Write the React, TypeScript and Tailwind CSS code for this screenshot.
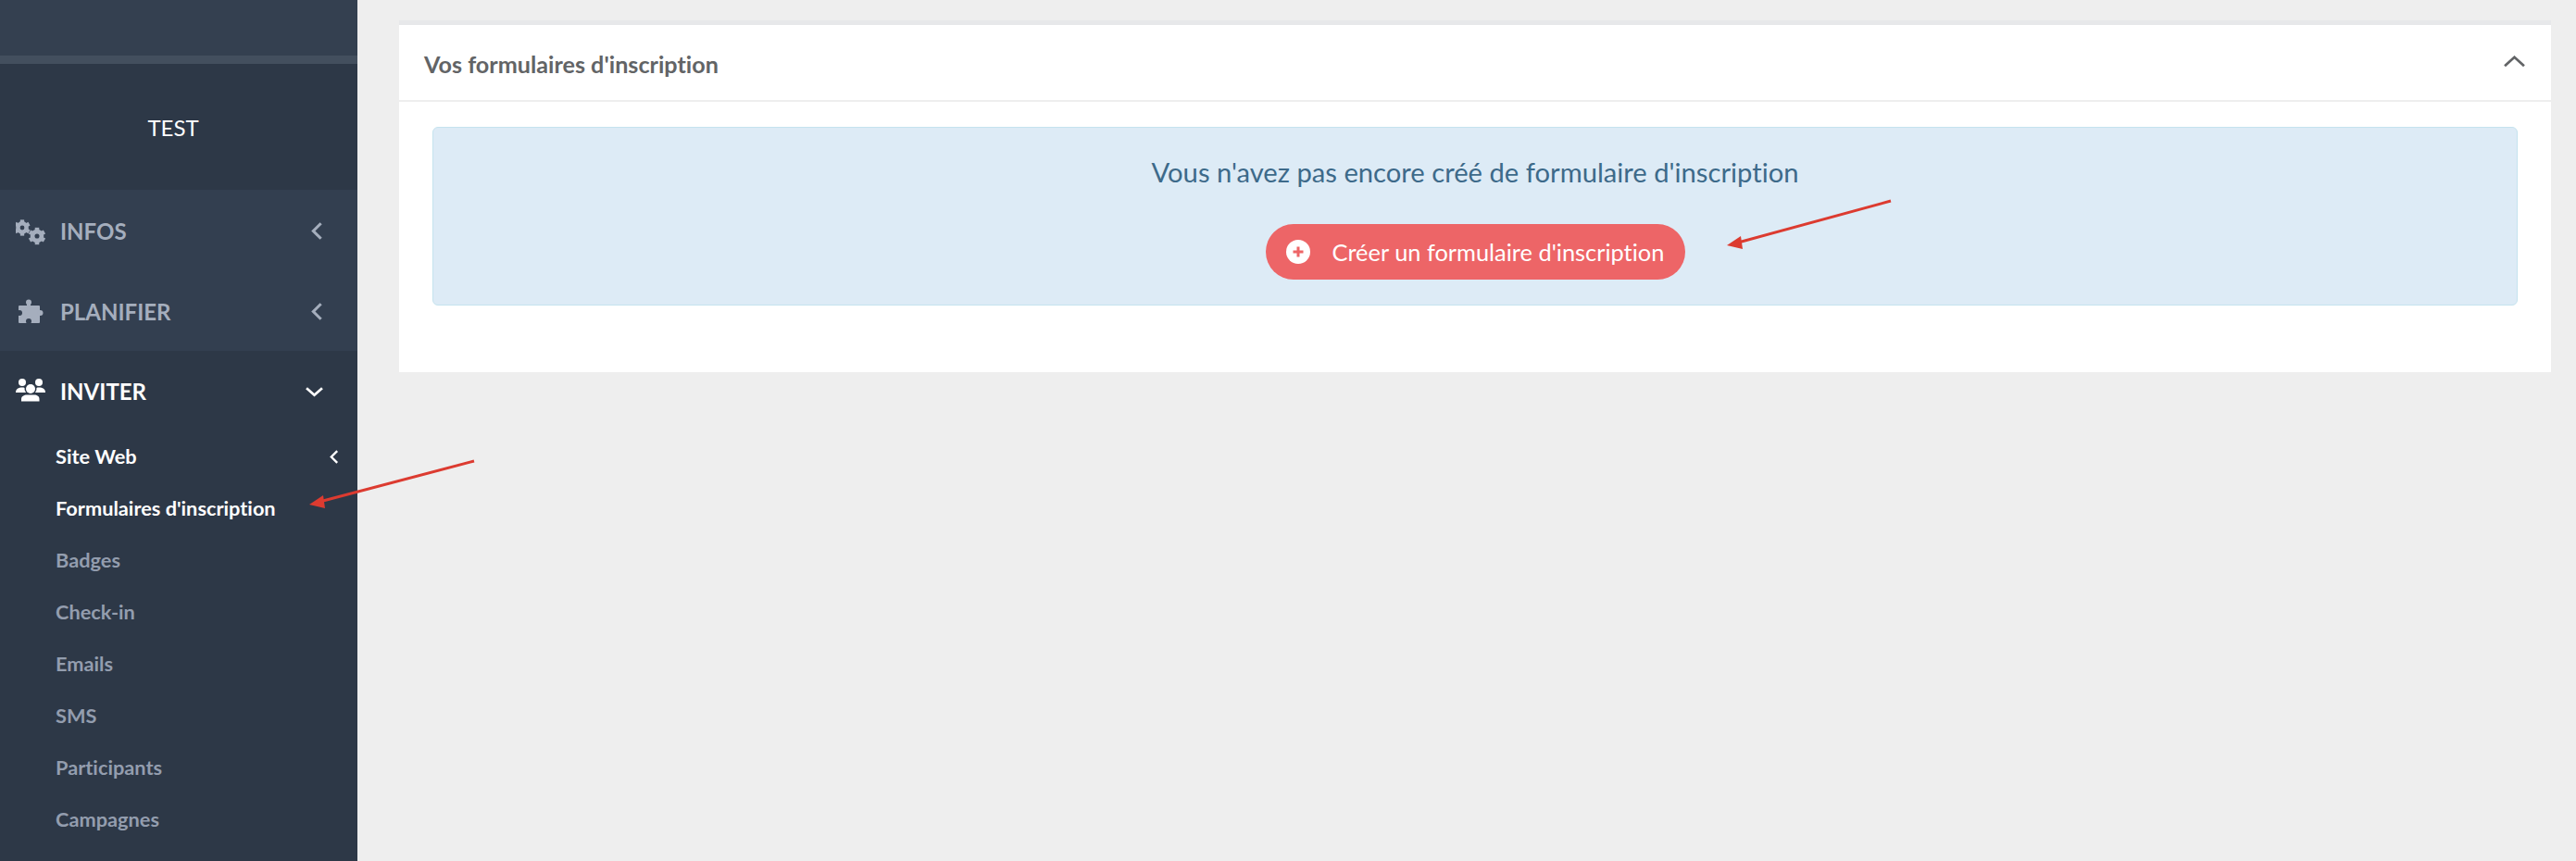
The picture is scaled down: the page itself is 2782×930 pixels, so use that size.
const font = "font-['Lato','Noto_Sans',sans-serif] [font-variant-ligatures:none]";

function Chevron({ dir, className }: { dir: "left" | "down" | "up"; className: string }) {
  const d = dir === "left" ? "M9 1 L2 8 L9 15" : dir === "down" ? "M1 2 L9 9 L17 2" : "M1 10 L11 1 L21 10";
  const vb = dir === "left" ? "0 0 11 16" : dir === "down" ? "0 0 18 11" : "0 0 22 11";
  return (
    <svg viewBox={vb} className={className} fill="none" stroke="currentColor" strokeWidth="2.6">
      <path d={d} />
    </svg>
  );
}

function Gear({ cx, cy, r }: { cx: number; cy: number; r: number }) {
  const angles = [0, 60, 120, 180, 240, 300];
  return (
    <g>
      <circle cx={cx} cy={cy} r={r * 0.58} fill="none" stroke="currentColor" strokeWidth={r * 0.56} />
      {angles.map((a) => (
        <rect key={a} x={cx - r * 0.27} y={cy - r * 1.08} width={r * 0.54} height={r * 0.42} fill="currentColor" transform={`rotate(${a} ${cx} ${cy})`} />
      ))}
    </g>
  );
}

function CogsIcon() {
  return (
    <svg viewBox="17 232 32 32" className="w-[32px] h-[32px]">
      <Gear cx={24} cy={244} r={8} />
      <Gear cx={40} cy={253} r={8.5} />
    </svg>
  );
}

function PuzzleIcon() {
  return (
    <svg viewBox="17 320 32 32" className="w-[32px] h-[32px]">
      <rect x="20" y="329" width="23" height="19" rx="1" fill="currentColor" />
      <rect x="29" y="325" width="4" height="6" fill="currentColor" />
      <circle cx="31" cy="325.5" r="3" fill="currentColor" />
      <circle cx="43.5" cy="337" r="3" fill="currentColor" />
      <circle cx="21" cy="337" r="3" fill="#333f50" />
      <rect x="18" y="335" width="3" height="4" fill="#333f50" />
      <circle cx="31" cy="346" r="3" fill="#333f50" />
      <rect x="29" y="346" width="4" height="3" fill="#333f50" />
    </svg>
  );
}

function UsersIcon() {
  return (
    <svg viewBox="17 407 32 32" className="w-[32px] h-[32px]">
      <circle cx="24" cy="413" r="4" fill="currentColor" />
      <circle cx="42" cy="413" r="4" fill="currentColor" />
      <path d="M17 424 C17 420 20 418.5 24 418.5 C26 418.5 27.5 419 28 420 L29 424 Z" fill="currentColor" />
      <path d="M49 424 C49 420 46 418.5 42 418.5 C40 418.5 38.5 419 38 420 L37 424 Z" fill="currentColor" />
      <circle cx="33" cy="420" r="6.5" fill="#2d3847" />
      <circle cx="33" cy="420" r="5" fill="currentColor" />
      <path d="M23 433.5 V431 C23 428 26 426.5 29 426.5 H37 C40 426.5 42.5 428 42.5 431 V433.5 Z" fill="currentColor" />
    </svg>
  );
}

function MainItem({ icon, label, chevron, active }: { icon: React.ReactNode; label: string; chevron: React.ReactNode; active?: boolean }) {
  return (
    <div className={`h-[87px] flex items-center pl-[17px] ${active ? "text-white" : "text-[#a5aebd] pt-[2px]"}`}>
      <span className="w-[32px] flex justify-center">{icon}</span>
      <span className="ml-[16px] text-[24px] font-bold leading-none">{label}</span>
      <span className="ml-auto">{chevron}</span>
    </div>
  );
}

function SubItem({ label, active, extra }: { label: string; active?: boolean; extra?: React.ReactNode }) {
  return (
    <div className={`h-[56px] flex items-center pl-[60px] text-[21.75px] font-bold pt-[1px] ${active ? "text-white" : "text-[#939dae]"}`}>
      <span>{label}</span>
      {extra}
    </div>
  );
}

export default function App() {
  return (
    <div className={`relative w-[2782px] h-[930px] overflow-hidden bg-[#eeeeee] flex ${font}`}>
      <aside className="w-[386px] h-full bg-[#2d3847] shrink-0 flex flex-col">
        <div className="h-[60px] bg-[#344050]" />
        <div className="h-[9px] bg-[#434f5e]" />
        <div className="h-[136px] flex items-center justify-center text-white text-[24px] pt-[2px] pr-[12px]">TEST</div>
        <div className="bg-[#333f50] h-[174px]">
          <MainItem icon={<CogsIcon />} label="INFOS" chevron={<Chevron dir="left" className="w-[13px] h-[21px] mr-[37px]" />} />
          <MainItem icon={<PuzzleIcon />} label="PLANIFIER" chevron={<Chevron dir="left" className="w-[13px] h-[21px] mr-[37px]" />} />
        </div>
        <MainItem active icon={<UsersIcon />} label="INVITER" chevron={<Chevron dir="down" className="w-[19px] h-[12px] mr-[37px]" />} />
        <div className="-mt-[1px]">
          <SubItem active label="Site Web" extra={<Chevron dir="left" className="w-[10px] h-[17px] ml-auto mr-[20px]" />} />
          <SubItem active label="Formulaires d'inscription" />
          <SubItem label="Badges" />
          <SubItem label="Check-in" />
          <SubItem label="Emails" />
          <SubItem label="SMS" />
          <SubItem label="Participants" />
          <SubItem label="Campagnes" />
        </div>
      </aside>

      <main className="flex-1 pl-[45px] pr-[27px] pt-[22px]">
        <section className="bg-white border-t-[5px] border-[#e7e8ea] h-[380px]">
          <header className="h-[83px] border-b-2 border-[#eeeeee] flex items-center justify-between pl-[27px] pr-[28px] text-[#626466]">
            <h2 className="text-[25.2px] font-bold pt-[4px]">Vos formulaires d'inscription</h2>
            <Chevron dir="up" className="w-[23px] h-[13px] mb-[3px]" />
          </header>
          <div className="px-[36px] pt-[27px]">
            <div className="h-[193px] rounded-[6px] bg-[#ddebf6] border border-[#c5e3ee] flex flex-col items-center pt-[28px]">
              <p className="text-[29.2px] leading-[40px] text-[#3d6a8a]">Vous n'avez pas encore créé de formulaire d'inscription</p>
              <button className="mt-[36px] h-[60px] w-[453px] rounded-full bg-[#ed6567] text-white text-[25.4px] flex items-center pl-[22px]">
                <svg viewBox="0 0 26 26" className="w-[26px] h-[26px]">
                  <circle cx="13" cy="13" r="13" fill="#fff" />
                  <path d="M13 7.5 V18.5 M7.5 13 H18.5" stroke="#ed6567" strokeWidth="3" />
                </svg>
                <span className="ml-[24px]">Créer un formulaire d'inscription</span>
              </button>
            </div>
          </div>
        </section>
      </main>

      <svg className="absolute left-0 top-0 w-[2782px] h-[930px] pointer-events-none" viewBox="0 0 2782 930">
        <path d="M512 498 L345 542" stroke="#dc3b30" strokeWidth="3" />
        <path d="M334 545 L349 535 L351 549 Z" fill="#dc3b30" />
        <path d="M2042 217 L1877 262" stroke="#dc3b30" strokeWidth="3" />
        <path d="M1865 265 L1880 255 L1882 269 Z" fill="#dc3b30" />
      </svg>
    </div>
  );
}
